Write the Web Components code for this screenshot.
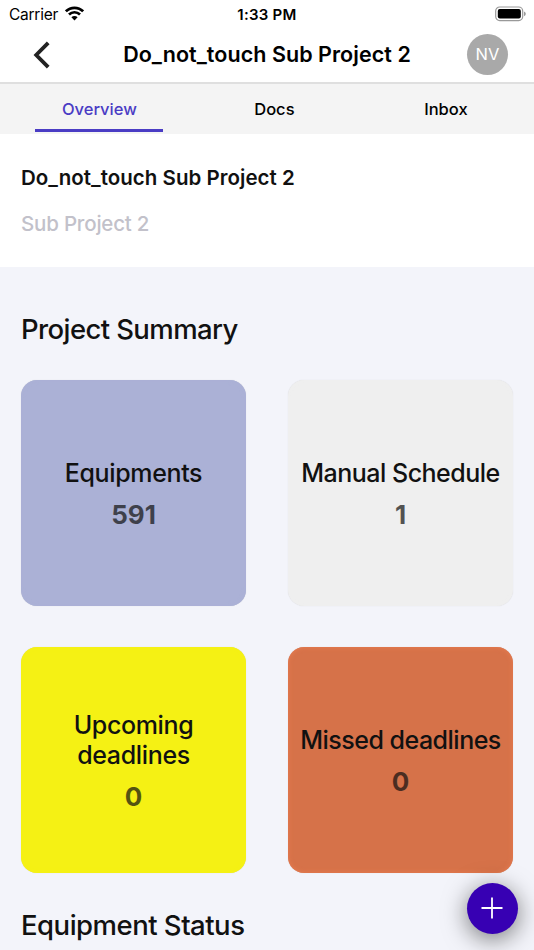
<!DOCTYPE html>
<html lang="en">
<head>
<meta charset="UTF-8">
<meta name="viewport" content="width=device-width, initial-scale=1.0">
<title>Project Overview</title>
<style>
    body {
        margin: 0;
        height: 950px;
        overflow: hidden;
        background: #f3f4fa;
        color: #111;
        font-family: Inter, "Liberation Sans", sans-serif;
    }
</style>
</head>
<body>
<project-app>
    <status-bar carrier="Carrier" time="1:33 PM"></status-bar>
    <nav-header initials="NV">Do_not_touch Sub Project 2</nav-header>
    <tab-bar>
        <tab-item active>Overview</tab-item>
        <tab-item>Docs</tab-item>
        <tab-item>Inbox</tab-item>
    </tab-bar>
    <project-info>
        Do_not_touch Sub Project 2
        <span slot="subtitle">Sub Project 2</span>
    </project-info>
    <section-title style="--spacing: -0.6px">Project Summary</section-title>
    <card-grid>
        <summary-card value="591" color="#abb1d6" style="--spacing: -0.35px">Equipments</summary-card>
        <summary-card value="1" color="#efefef">Manual Schedule</summary-card>
        <summary-card value="0" color="#f5f114" style="--spacing: -0.35px">Upcoming deadlines</summary-card>
        <summary-card value="0" color="#d67249" glow="#e97c50">Missed deadlines</summary-card>
    </card-grid>
    <section-title style="--top: 32px; --spacing: -0.5px">Equipment Status</section-title>
    <add-button></add-button>
</project-app>

<script>
class ProjectApp extends HTMLElement {
    constructor() {
        super();
        this.attachShadow({ mode: 'open' });
        this.shadowRoot.innerHTML = `
            <style>
                :host {
                    display: flex;
                    flex-direction: column;
                    position: relative;
                    width: 534px;
                    height: 950px;
                    overflow: hidden;
                }
                ::slotted(*) { flex-shrink: 0; }
            </style>
            <slot></slot>
        `;
    }
}

class StatusBar extends HTMLElement {
    connectedCallback() {
        this.attachShadow({ mode: 'open' });
        this.shadowRoot.innerHTML = `
            <style>
                :host {
                    display: grid;
                    grid-template-columns: 1fr auto 1fr;
                    align-items: center;
                    box-sizing: border-box;
                    height: 28px;
                    padding: 0 7px 0 9px;
                    background: #fff;
                    color: #000;
                    font-size: 15.5px;
                    line-height: 29px;
                }
                .left { display: flex; align-items: center; gap: 7px; letter-spacing: -0.25px; }
                .left svg { margin-top: -3px; }
                .time {
                    margin-right: 2px;
                    font-weight: 600;
                    font-size: 15px;
                    letter-spacing: 0.25px;
                }
                .battery { justify-self: end; margin-top: -2px; }
                svg { display: block; }
            </style>
            <div class="left">
                <span>${this.getAttribute('carrier')}</span>
                <svg width="19" height="15" viewBox="0 0 19 15">
                    <g fill="none" stroke="#000" stroke-width="2.7">
                        <path d="M0.9 5.3A12.3 12.3 0 0 1 18.1 5.3"/>
                        <path d="M4 8.5A7.9 7.9 0 0 1 15 8.5"/>
                    </g>
                    <path d="M9.5 14.4L6.4 11.3A4.4 4.4 0 0 1 12.6 11.3Z"/>
                </svg>
            </div>
            <span class="time">${this.getAttribute('time')}</span>
            <svg class="battery" width="32" height="16" viewBox="0 0 32 16">
                <rect x="0.7" y="1" width="27" height="13.6" rx="4" fill="none" stroke="#999" stroke-width="1.2"/>
                <rect x="2.8" y="3" width="23" height="9.6" rx="2"/>
                <path d="M29 5.4Q30.8 6.2 30.8 7.8T29 10.2Z" fill="#999"/>
            </svg>
        `;
    }
}

class NavHeader extends HTMLElement {
    connectedCallback() {
        this.attachShadow({ mode: 'open' });
        this.shadowRoot.innerHTML = `
            <style>
                :host {
                    display: grid;
                    grid-template-columns: 82px 1fr 82px;
                    align-items: center;
                    box-sizing: border-box;
                    height: 56px;
                    padding-bottom: 1px;
                    background: #fff;
                    border-bottom: 2px solid #dfdfdf;
                    color: #000;
                }
                .back { display: block; margin-left: 33px; }
                h1 {
                    margin: -1px 0 0;
                    text-align: center;
                    font-size: 21.5px;
                    font-weight: 600;
                    letter-spacing: 0.05px;
                    white-space: nowrap;
                }
                .avatar {
                    width: 41px;
                    height: 41px;
                    margin-left: 15px;
                    border-radius: 50%;
                    background: #a9a9a9;
                    color: #fff;
                    font-size: 16.5px;
                    line-height: 41px;
                    text-align: center;
                }
            </style>
            <svg class="back" width="18" height="28" viewBox="0 0 18 28">
                <path d="M15.2 1.8L3.2 14L15.2 26.2" fill="none" stroke="#222" stroke-width="3.8"/>
            </svg>
            <h1><slot></slot></h1>
            <div class="avatar">${this.getAttribute('initials')}</div>
        `;
    }
}

class TabBar extends HTMLElement {
    constructor() {
        super();
        this.attachShadow({ mode: 'open' });
        this.shadowRoot.innerHTML = `
            <style>
                :host {
                    display: grid;
                    grid-template-columns: 175px 171.5px 128px;
                    box-sizing: border-box;
                    height: 50px;
                    padding: 0 0 2px 35.4px;
                    background: #f4f4f4;
                }
            </style>
            <slot></slot>
        `;
    }
}

class TabItem extends HTMLElement {
    constructor() {
        super();
        this.attachShadow({ mode: 'open' });
        this.shadowRoot.innerHTML = `
            <style>
                :host {
                    display: block;
                    box-sizing: border-box;
                    width: 128px;
                    padding-top: 5px;
                    border-bottom: 3px solid transparent;
                    color: #000;
                    font-size: 16.5px;
                    font-weight: 500;
                    line-height: 40px;
                    text-align: center;
                }
                :host([active]) {
                    border-color: #4a3cc4;
                    color: #4a3cc4;
                }
            </style>
            <slot></slot>
        `;
    }
}

class ProjectInfo extends HTMLElement {
    constructor() {
        super();
        this.attachShadow({ mode: 'open' });
        this.shadowRoot.innerHTML = `
            <style>
                :host {
                    display: flex;
                    flex-direction: column;
                    gap: 16px;
                    box-sizing: border-box;
                    height: 133px;
                    padding: 29px 21px 0;
                    background: #fff;
                    font-size: 20.5px;
                    line-height: 30px;
                }
                h2 {
                    margin: 0;
                    font-size: inherit;
                    font-weight: 600;
                    letter-spacing: 0.03px;
                }
                .subtitle {
                    color: #c2c1ca;
                    font-weight: 500;
                    letter-spacing: -0.2px;
                }
            </style>
            <h2><slot></slot></h2>
            <div class="subtitle"><slot name="subtitle"></slot></div>
        `;
    }
}

class SectionTitle extends HTMLElement {
    constructor() {
        super();
        this.attachShadow({ mode: 'open' });
        this.shadowRoot.innerHTML = `
            <style>
                :host {
                    display: block;
                    padding: var(--top, 42px) 21px 31px;
                }
                h2 {
                    margin: 0;
                    font-size: 27.5px;
                    font-weight: 500;
                    letter-spacing: var(--spacing, -0.5px);
                    line-height: 40px;
                }
            </style>
            <h2><slot></slot></h2>
        `;
    }
}

class CardGrid extends HTMLElement {
    constructor() {
        super();
        this.attachShadow({ mode: 'open' });
        this.shadowRoot.innerHTML = `
            <style>
                :host {
                    display: grid;
                    grid-template-columns: 225px 225px;
                    grid-auto-rows: 226px;
                    gap: 41.2px 42px;
                    padding: 0 21px;
                }
            </style>
            <slot></slot>
        `;
    }
}

class SummaryCard extends HTMLElement {
    connectedCallback() {
        const color = this.getAttribute('color');
        const glow = this.getAttribute('glow') || color;

        this.attachShadow({ mode: 'open' });
        this.shadowRoot.innerHTML = `
            <style>
                :host {
                    display: flex;
                    flex-direction: column;
                    align-items: center;
                    justify-content: center;
                    gap: 12px;
                    padding-top: 2px;
                    border-radius: 16px;
                    background: ${color};
                    box-shadow: inset 0 0 5px ${glow}, 0 0 1px rgba(0, 0, 0, 0.15);
                    text-align: center;
                }
                .label {
                    max-width: 205px;
                    font-size: 25px;
                    font-weight: 500;
                    letter-spacing: var(--spacing, -0.5px);
                    line-height: 30px;
                }
                .value {
                    font-size: 26px;
                    font-weight: 700;
                    line-height: 30px;
                    opacity: 0.7;
                }
            </style>
            <div class="label"><slot></slot></div>
            <div class="value">${this.getAttribute('value')}</div>
        `;
    }
}

class AddButton extends HTMLElement {
    constructor() {
        super();
        this.attachShadow({ mode: 'open' });
        this.shadowRoot.innerHTML = `
            <style>
                :host {
                    position: absolute;
                    right: 16px;
                    bottom: 16px;
                    display: grid;
                    place-items: center;
                    width: 51.5px;
                    height: 51.5px;
                    border-radius: 50%;
                    background: #3700b3;
                    box-shadow: 0 5px 24px rgba(0, 0, 0, 0.52);
                }
            </style>
            <svg width="22" height="22" viewBox="0 0 22 22">
                <path d="M11 0.5V21.5M0.5 11H21.5" stroke="#fff" stroke-width="1.8"/>
            </svg>
        `;
    }
}

customElements.define('project-app', ProjectApp);
customElements.define('status-bar', StatusBar);
customElements.define('nav-header', NavHeader);
customElements.define('tab-bar', TabBar);
customElements.define('tab-item', TabItem);
customElements.define('project-info', ProjectInfo);
customElements.define('section-title', SectionTitle);
customElements.define('card-grid', CardGrid);
customElements.define('summary-card', SummaryCard);
customElements.define('add-button', AddButton);
</script>
</body>
</html>
